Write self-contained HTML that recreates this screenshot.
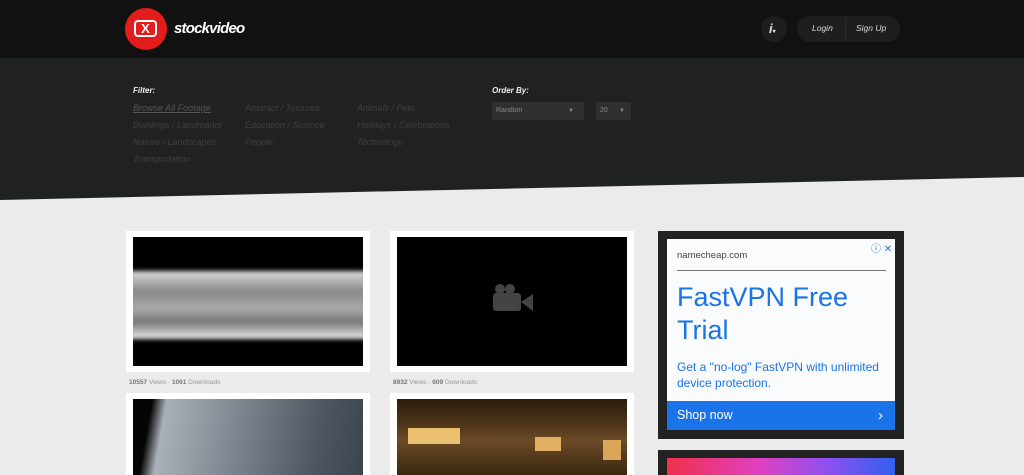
<!DOCTYPE html>
<html><head><style>
*{margin:0;padding:0;box-sizing:border-box}
body{width:1024px;height:475px;overflow:hidden;background:#ebebeb;font-family:"Liberation Sans",sans-serif;position:relative}
.abs{position:absolute}
.hdr{left:0;top:0;width:1024px;height:58px;background:#111}
.band{left:0;top:58px;width:1024px;height:145px;background:#202121;clip-path:polygon(0 0,100% 0,100% 119px,0 142px)}
.f{font-size:9px;color:#3e4040;font-style:italic}
.card{background:#fff;width:244px}
.cap{font-size:6.5px;color:#999}
.cap b{color:#777}
</style></head><body>
<div class="abs hdr"></div>
<div class="abs band"></div>
<div class="abs" style="left:125px;top:8px;width:42px;height:42px;border-radius:50%;background:#e31c1c"></div>
<div class="abs" style="left:134px;top:20px;width:23px;height:17px;border:2px solid #fff;border-radius:4px;background:#e31c1c;color:#fff;font-weight:bold;font-size:13px;line-height:13px;text-align:center">X</div>
<div class="abs" style="left:174px;top:20px;color:#fff;font-weight:bold;font-style:italic;font-size:15px;letter-spacing:-0.8px">stockvideo</div>
<div class="abs" style="left:761px;top:16px;width:26px;height:26px;border-radius:50%;background:#1e1e1e;color:#ddd;font-weight:bold;font-style:italic;font-size:13px;line-height:26px;padding-left:8px">i<span style="font-size:6px;font-style:normal">▾</span></div>
<div class="abs" style="left:797px;top:16px;width:103px;height:26px;border-radius:13px;background:#1e1e1e"></div>
<div class="abs" style="left:845px;top:18px;width:1px;height:22px;background:#2c2c2c"></div>
<div class="abs" style="left:812px;top:23px;color:#ddd;font-size:8.5px;font-style:italic">Login</div>
<div class="abs" style="left:856px;top:23px;color:#ddd;font-size:8.5px;font-style:italic">Sign Up</div>
<div class="abs" style="left:133px;top:86px;color:#eee;font-size:8px;font-weight:bold;font-style:italic">Filter:</div>
<div class="abs f" style="left:133px;top:103px;text-decoration:underline;color:#555">Browse All Footage</div>
<div class="abs f" style="left:133px;top:120px">Buildings / Landmarks</div>
<div class="abs f" style="left:133px;top:137px">Nature / Landscapes</div>
<div class="abs f" style="left:133px;top:154px">Transportation</div>
<div class="abs f" style="left:245px;top:103px">Abstract / Textures</div>
<div class="abs f" style="left:245px;top:120px">Education / Science</div>
<div class="abs f" style="left:245px;top:137px">People</div>
<div class="abs f" style="left:357px;top:103px">Animals / Pets</div>
<div class="abs f" style="left:357px;top:120px">Holidays / Celebrations</div>
<div class="abs f" style="left:357px;top:137px">Technology</div>
<div class="abs" style="left:492px;top:86px;color:#eee;font-size:8px;font-weight:bold;font-style:italic">Order By:</div>
<div class="abs" style="left:492px;top:102px;width:92px;height:18px;background:#2e2f2f;color:#888;font-size:7px;line-height:18px;padding-left:4px">Random<span style="position:absolute;right:10px;font-size:6px">▼</span></div>
<div class="abs" style="left:596px;top:102px;width:35px;height:18px;background:#2e2f2f;color:#888;font-size:7px;line-height:18px;padding-left:4px">20<span style="position:absolute;right:6px;font-size:6px">▼</span></div>
<div class="abs card" style="left:126px;top:231px;height:141px"></div>
<div class="abs" style="left:133px;top:237px;width:230px;height:129px;background:#000;overflow:hidden">
<div style="position:absolute;left:-10px;top:34px;width:250px;height:68px;background:linear-gradient(#ddd,#888 30%,#aaa 55%,#777 75%,#eee);filter:blur(2px);border-radius:10px"></div></div>
<div class="abs card" style="left:390px;top:231px;height:141px"></div>
<div class="abs" style="left:397px;top:237px;width:230px;height:129px;background:#000"></div>
<svg class="abs" style="left:493px;top:284px" width="42" height="30" viewBox="0 0 42 30"><circle cx="7" cy="5" r="5" fill="#444"/><circle cx="17" cy="5" r="5" fill="#444"/><rect x="0" y="9" width="28" height="18" rx="3" fill="#444"/><path d="M28 18 L40 10 V27 Z" fill="#444"/></svg>
<div class="abs cap" style="left:129px;top:379px"><b>10557</b> Views · <b>1061</b> Downloads</div>
<div class="abs cap" style="left:393px;top:379px"><b>8932</b> Views · <b>609</b> Downloads</div>
<div class="abs card" style="left:126px;top:393px;height:82px"></div>
<div class="abs" style="left:133px;top:399px;width:230px;height:76px;background:linear-gradient(100deg,#050505 8%,#aab0b8 14%,#7d858e 45%,#4d5560 80%,#3c444e)"></div>
<div class="abs card" style="left:390px;top:393px;height:82px"></div>
<div class="abs" style="left:397px;top:399px;width:230px;height:76px;background:linear-gradient(#2b1c0c,#4a3318 30%,#6b4a25 55%,#3a2812)"></div>
<div class="abs" style="left:408px;top:428px;width:52px;height:16px;background:#e8c070"></div>
<div class="abs" style="left:535px;top:437px;width:26px;height:14px;background:#e0b060"></div>
<div class="abs" style="left:603px;top:440px;width:18px;height:20px;background:#d8a858"></div>
<div class="abs" style="left:658px;top:231px;width:246px;height:208px;background:#222"></div>
<div class="abs" style="left:667px;top:239px;width:228px;height:191px;background:#fafbfd"></div>
<div class="abs" style="left:677px;top:250px;font-size:9.5px;color:#444">namecheap.com</div>
<div class="abs" style="left:871px;top:240px;font-size:10px;color:#1a73e8">ⓘ ✕</div>
<div class="abs" style="left:677px;top:270px;width:209px;height:1px;background:#777"></div>
<div class="abs" style="left:677px;top:281px;font-size:27px;color:#1a73e8;line-height:33px">FastVPN Free<br>Trial</div>
<div class="abs" style="left:677px;top:359px;font-size:12px;color:#1a73e8;line-height:16px">Get a "no-log" FastVPN with unlimited<br>device protection.</div>
<div class="abs" style="left:667px;top:401px;width:228px;height:29px;background:#1a73e8;color:#fff;font-size:12.5px;line-height:29px;padding-left:10px">Shop now<span style="position:absolute;right:12px;font-size:15px">›</span></div>
<div class="abs" style="left:658px;top:450px;width:246px;height:25px;background:#222"></div>
<div class="abs" style="left:667px;top:458px;width:228px;height:17px;background:linear-gradient(90deg,#f0304a,#e040c0 40%,#9050f0 70%,#3060f0)"></div>
</body></html>
